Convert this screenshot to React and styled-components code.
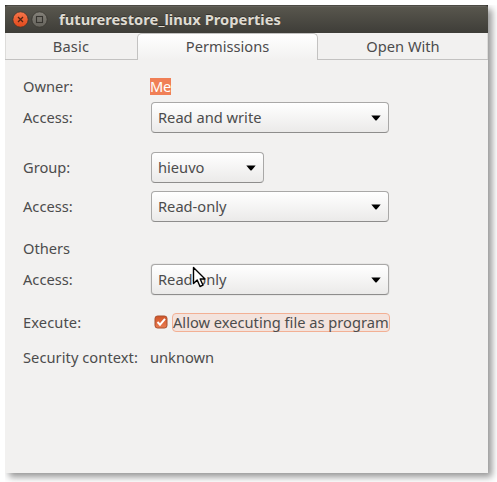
import React from "react";
import styled, { createGlobalStyle } from "styled-components";

const GlobalStyle = createGlobalStyle`
  * { box-sizing: border-box; }
  body { margin: 0; background: #fff; overflow: hidden; }
`;

const Desktop = styled.main`
  width: 497px;
  height: 482px;
  padding: 5px 9px 9px 5px;
  background: #fff;
  overflow: hidden;
`;

const Window = styled.section`
  display: flex;
  flex-direction: column;
  width: 483px;
  height: 468px;
  background: #f2f1f0;
  color: #4c4c4c;
  font: 14.67px/20px "Noto Sans", "Open Sans", sans-serif;
  box-shadow: 4px 4px 7px rgba(0, 0, 0, 0.42);
  clip-path: inset(0 -10px -10px 0);
  white-space: nowrap;
`;

const TitleBar = styled.header`
  display: flex;
  align-items: center;
  padding-left: 7px;
  gap: 2px;
  background: linear-gradient(#59574e, #3e3d38);
  border-top: 1px solid #4b4943;
  border-radius: 3px 3px 0 0;
  box-shadow: inset 0 1px #63615a;
`;

const TitleCorners = styled.div`
  flex: 0 0 28px;
  display: grid;
  background: #2e2d2a;
`;

const ControlIcon = styled.svg`
  width: 17px;
  height: 17px;
  display: block;
`;

const Title = styled.h1`
  margin: 0 0 0 9px;
  padding-bottom: 2px;
  color: #dfdbd2;
  font-size: 14.67px;
  font-weight: 700;
  line-height: 20px;
  letter-spacing: 0.03px;
  text-shadow: 0 -1px rgba(0, 0, 0, 0.35);
`;

const Tabs = styled.nav`
  display: grid;
  grid-template-columns: 132px 181px 170px;
  flex: 0 0 27px;
`;

const Tab = styled.div`
  display: flex;
  align-items: center;
  justify-content: center;
  height: 27px;
  letter-spacing: ${(p) => p.$spacing || "0"};
  padding-bottom: ${(p) => (p.$active ? "2px" : "0")};
  border: 0 solid #c3c2c1;
  border-width: ${(p) => (p.$active ? "1px 1px 0" : "0 0 1px")};
  border-radius: ${(p) => (p.$active ? "5px 5px 0 0" : "0")};
  background: ${(p) => (p.$active ? "linear-gradient(#fff, #f2f1f0)" : "transparent")};
  box-shadow: ${(p) => (p.$edge ? `inset ${p.$edge} 0 #dddcda` : "none")};
`;

const Form = styled.div`
  display: flex;
  flex-direction: column;
  padding: 16px 0 0 18px;
`;

const Row = styled.div`
  display: grid;
  grid-template-columns: 127px auto;
  align-items: center;
  justify-content: start;
  height: ${(p) => p.$height || 20}px;
  margin-top: ${(p) => p.$gap || 0}px;
`;

const Label = styled.span`
  letter-spacing: ${(p) => p.$spacing || "0"};
  padding-bottom: ${(p) => (p.$raised ? "2px" : "0")};
`;

const Selected = styled.span`
  height: 17px;
  line-height: 17px;
  background: #f07f56;
  color: #fff;
  letter-spacing: -0.3px;
`;

const Select = styled.div`
  display: flex;
  align-items: center;
  justify-content: space-between;
  width: ${(p) => p.$width || 238}px;
  height: 31px;
  margin-left: 1px;
  padding: 0 7px 0 6px;
  border: 1px solid #a9a8a7;
  border-bottom-color: #8e8d8c;
  border-radius: 4px;
  background: linear-gradient(#fff, #ebeae9);
  box-shadow: ${(p) => (p.$hover ? "0 0 1px #8e8d8c" : "none")};
`;

const ArrowIcon = styled.svg`
  width: 10px;
  height: 6px;
  display: block;
`;

const CheckOption = styled.div`
  display: flex;
  align-items: center;
  gap: 4px;
  padding-left: 4px;
`;

const CheckIcon = styled.svg`
  width: 14px;
  height: 14px;
  display: block;
`;

const FocusedLabel = styled.span`
  width: 218px;
  height: 19px;
  line-height: 16px;
  border: 1px solid #f3b094;
  border-radius: 4px;
  background: #f3e3dd;
`;

const Pointer = styled.svg`
  position: absolute;
  left: 192px;
  top: 266px;
  width: 15px;
  height: 23px;
`;

function Dropdown({ children, width, hover }) {
  return (
    <Select $width={width} $hover={hover}>
      <Label $raised>{children}</Label>
      <ArrowIcon viewBox="0 0 10 6">
        <path d="M0.3 0.5H9.7L5.7 5.2Q5 5.9 4.3 5.2Z" fill="#000" />
      </ArrowIcon>
    </Select>
  );
}

function WindowControl({ close }) {
  return (
    <ControlIcon viewBox="0 0 17 17" fill="none">
      <defs>
        <linearGradient id={close ? "close" : "maximize"} x2="0" y2="1">
          <stop stopColor={close ? "#f7764b" : "#85827a"} />
          <stop offset="1" stopColor={close ? "#e1481b" : "#65635c"} />
        </linearGradient>
      </defs>
      <circle cx="8.5" cy="8.5" r="7.7" fill={close ? "url(#close)" : "url(#maximize)"} stroke="#37352f" strokeWidth="0.8" />
      {close ? (
        <path d="M6 6L11 11M11 6L6 11" stroke="#532412" strokeWidth="1.3" />
      ) : (
        <rect x="5.5" y="5.5" width="6" height="6" stroke="#36342f" strokeWidth="1.1" />
      )}
    </ControlIcon>
  );
}

export default function App() {
  return (
    <Desktop>
      <GlobalStyle />
      <Window>
        <TitleCorners>
          <TitleBar>
            <WindowControl close />
            <WindowControl />
            <Title>futurerestore_linux Properties</Title>
          </TitleBar>
        </TitleCorners>
        <Tabs>
          <Tab $edge="1px" $spacing="0.2px">Basic</Tab>
          <Tab $active>Permissions</Tab>
          <Tab $edge="-1px">Open With</Tab>
        </Tabs>
        <Form>
          <Row>
            <Label>Owner:</Label>
            <Selected>Me</Selected>
          </Row>
          <Row $height={31} $gap={6}>
            <Label $raised>Access:</Label>
            <Dropdown>Read and write</Dropdown>
          </Row>
          <Row $height={31} $gap={19}>
            <Label $raised>Group:</Label>
            <Dropdown width={113}>hieuvo</Dropdown>
          </Row>
          <Row $height={31} $gap={8}>
            <Label $raised>Access:</Label>
            <Dropdown>Read-only</Dropdown>
          </Row>
          <Row $gap={16}>
            <Label>Others</Label>
          </Row>
          <Row $height={31} $gap={6}>
            <Label $raised>Access:</Label>
            <Dropdown hover>Read-only</Dropdown>
          </Row>
          <Row $gap={17}>
            <Label $spacing="0.1px">Execute:</Label>
            <CheckOption>
              <CheckIcon viewBox="0 0 14 14">
                <defs>
                  <linearGradient id="check" x2="0" y2="1">
                    <stop stopColor="#d05428" />
                    <stop offset="1" stopColor="#ea7c51" />
                  </linearGradient>
                </defs>
                <rect x="1" y="1" width="12" height="12" rx="2.5" fill="url(#check)" stroke="#a9502f" />
                <path d="M3.5 7L6 9.7L11 3.8" fill="none" stroke="#fff" strokeWidth="1.9" />
              </CheckIcon>
              <FocusedLabel>Allow executing file as program</FocusedLabel>
            </CheckOption>
          </Row>
          <Row $gap={15}>
            <Label $spacing="0.05px">Security context:</Label>
            <Label>unknown</Label>
          </Row>
        </Form>
      </Window>
      <Pointer viewBox="0 0 15 23">
        <path
          d="M1.5 1.5V17.5L5.2 14L8 20.5L11 19.2L8.2 13H13Z"
          fill="#fff"
          stroke="#000"
          strokeWidth="1.4"
          strokeLinejoin="round"
        />
      </Pointer>
    </Desktop>
  );
}
